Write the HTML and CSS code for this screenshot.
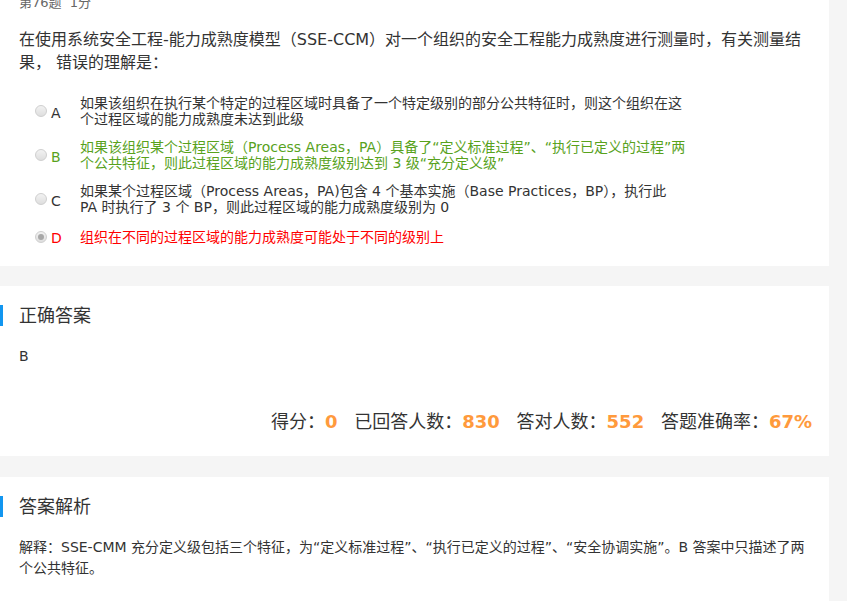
FILE: index.html
```html
<!DOCTYPE html>
<html lang="zh-CN">
<head>
  <meta charset="UTF-8">
  <title>第76题</title>
  <link rel="stylesheet" href="styles.css">
</head>
<body>

  <div class="page">

    <!-- Question -->
    <div class="card question-card">
      <div class="q-meta">第76题&nbsp;&nbsp;1分</div>
      <p class="q-title">在使用系统安全工程-能力成熟度模型（SSE-CCM）对一个组织的安全工程能力成熟度进行测量时，有关测量结果， 错误的理解是：</p>

      <div class="options">
        <div class="option">
          <div class="opt-label"><span class="radio"></span><span class="letter">A</span></div>
          <div class="opt-text">如果该组织在执行某个特定的过程区域时具备了一个特定级别的部分公共特征时，则这个组织在这个过程区域的能力成熟度未达到此级</div>
        </div>
        <div class="option right">
          <div class="opt-label"><span class="radio"></span><span class="letter">B</span></div>
          <div class="opt-text">如果该组织某个过程区域（Process Areas，PA）具备了“定义标准过程”、“执行已定义的过程”两个公共特征，则此过程区域的能力成熟度级别达到 3 级“充分定义级”</div>
        </div>
        <div class="option">
          <div class="opt-label"><span class="radio"></span><span class="letter">C</span></div>
          <div class="opt-text">如果某个过程区域（Process Areas，PA)包含 4 个基本实施（Base Practices，BP），执行此 PA 时执行了 3 个 BP，则此过程区域的能力成熟度级别为 0</div>
        </div>
        <div class="option wrong">
          <div class="opt-label"><span class="radio checked"></span><span class="letter">D</span></div>
          <div class="opt-text">组织在不同的过程区域的能力成熟度可能处于不同的级别上</div>
        </div>
      </div>
    </div>

    <!-- Correct answer -->
    <div class="card">
      <h2 class="card-title">正确答案</h2>
      <div class="answer">B</div>
      <div class="stats">
        <span class="stat">得分：<b>0</b></span>
        <span class="stat">已回答人数：<b>830</b></span>
        <span class="stat">答对人数：<b>552</b></span>
        <span class="stat">答题准确率：<b>67%</b></span>
      </div>
    </div>

    <!-- Analysis -->
    <div class="card">
      <h2 class="card-title">答案解析</h2>
      <p class="analysis">解释：SSE-CMM 充分定义级包括三个特征，为“定义标准过程”、“执行已定义的过程”、“安全协调实施”。B 答案中只描述了两个公共特征。</p>
    </div>

  </div>

</body>
</html>
```

FILE: styles.css
```css
body {
  margin: 0;
  padding: 0;
  background-color: #f5f5f5;
  font-family: "DejaVu Sans", "Noto Sans CJK SC", sans-serif;
  color: #333;
  overflow: hidden;
}

.page {
  width: 829px;
}

.card {
  background-color: #fff;
  padding: 18px 17px 22px 19px;
  margin-bottom: 21px;
}

.question-card {
  margin-top: -7px;
  padding-top: 0;
  padding-bottom: 20px;
  margin-bottom: 20px;
}

.q-meta {
  font-size: 13px;
  line-height: 20px;
  color: #666;
}

.q-title {
  font-size: 16px;
  line-height: 23px;
  margin: 15px 0 21px;
}

.option {
  display: flex;
  align-items: center;
  margin-bottom: 12px;
  font-size: 14px;
  line-height: 16px;
}

.option:last-child {
  margin-bottom: 0;
}

.opt-label {
  display: flex;
  align-items: center;
  width: 45px;
  padding-left: 16px;
  flex-shrink: 0;
}

.radio {
  display: inline-block;
  position: relative;
  width: 10px;
  height: 10px;
  border: 1px solid #cfcfcf;
  border-radius: 50%;
  background: linear-gradient(#f2f2f2, #dedede);
  margin-right: 4px;
}

.radio.checked::after {
  content: "";
  position: absolute;
  left: 2px;
  top: 2px;
  width: 6px;
  height: 6px;
  border-radius: 50%;
  background-color: #a8a8a8;
}

.letter {
  font-size: 14px;
  margin-top: 3px;
}

.opt-text {
  width: 606px;
}

.right {
  color: #58a21c;
}

.wrong {
  color: #f00;
}

.card-title {
  position: relative;
  margin: 0;
  font-size: 18px;
  line-height: 24px;
  font-weight: normal;
  color: #333;
}

.card-title::before {
  content: "";
  position: absolute;
  left: -19px;
  top: 1px;
  width: 3px;
  height: 21px;
  background-color: #1296f0;
}

.answer {
  margin-top: 18px;
  font-size: 14px;
  line-height: 20px;
}

.stats {
  margin-top: 44px;
  text-align: right;
  font-size: 18px;
  line-height: 24px;
}

.stat {
  margin-left: 11px;
}

.stat b {
  color: #ff9a3c;
}

.analysis {
  margin: 18px 0 0;
  max-width: 790px;
  font-size: 14px;
  line-height: 21px;
}
```
